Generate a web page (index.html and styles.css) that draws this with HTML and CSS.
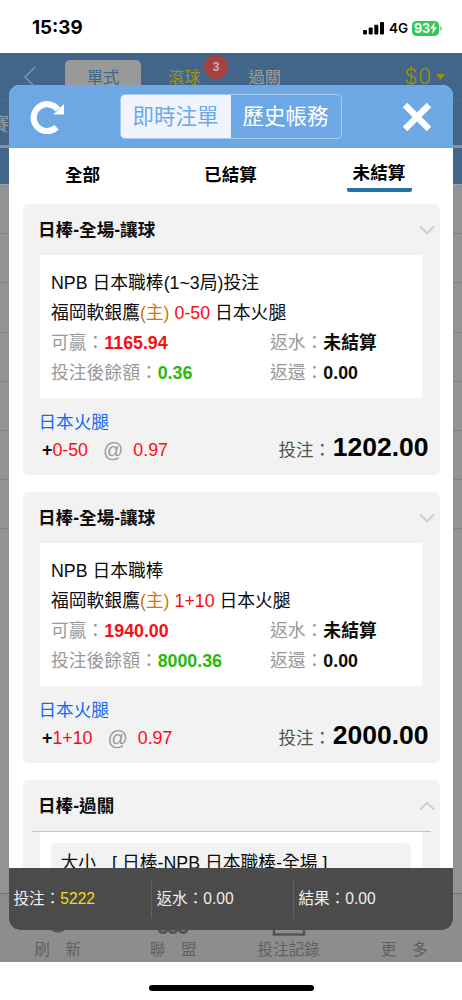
FILE: index.html
```html
<!DOCTYPE html>
<html lang="zh-Hant">
<head>
<meta charset="utf-8">
<meta name="viewport" content="width=device-width, initial-scale=1">
<title>注單</title>
<link rel="stylesheet" href="styles.css">
</head>
<body>
<div class="phone">
  <header class="status">
    <span class="clock">15:39</span>
    <span class="status-right">
      <svg class="signal" width="21" height="14" viewBox="0 0 21 14"><rect x="0" y="9" width="4" height="4.5" rx="1"/><rect x="5.7" y="6.5" width="4" height="7" rx="1"/><rect x="11.3" y="3.8" width="4" height="9.7" rx="1"/><rect x="17" y="1" width="4" height="12.5" rx="1"/></svg>
      <span class="network">4G</span>
      <span class="battery"><span>93</span><svg width="7" height="12" viewBox="0 0 7 12"><path d="M5 0 0 6.6h3L1.800 12 7 5.200H4z" fill="#fff"/></svg></span>
      <span class="nub"></span>
    </span>
  </header>

  <div class="page">
    <div class="topbar">
      <svg class="back" width="13" height="22" viewBox="0 0 13 22"><path d="M12 1 2 11 12 21" fill="none" stroke="#8598aa" stroke-width="1.300"/></svg>
      <span class="mode active">單式</span>
      <span class="mode live">滾球<b class="badge">3</b></span>
      <span class="mode parlay">過關</span>
      <span class="balance">$0</span>
      <span class="caret"></span>
    </div>
    <div class="subbar"><span class="sport">賽</span></div>
    <div class="subbar-2"></div>
    <div class="rows"><i></i><i></i><i></i><i></i><i></i><i></i><i></i></div>
    <nav class="dock">
      <div><svg width="34" height="16" viewBox="0 0 34 16"><circle cx="17" cy="-1" r="9" fill="none" stroke="#555" stroke-width="3"/></svg><span>刷&#12288;新</span></div>
      <div><svg width="34" height="16" viewBox="0 0 34 16"><g fill="none" stroke="#555" stroke-width="3"><circle cx="7" cy="5.500" r="4"/><circle cx="17" cy="5.500" r="4"/><circle cx="27" cy="5.500" r="4"/></g></svg><span>聯&#12288;盟</span></div>
      <div><svg width="34" height="16" viewBox="0 0 34 16"><path d="M2 0V11.500H32V0" fill="none" stroke="#555" stroke-width="2.500"/></svg><span>投注記錄</span></div>
      <div><svg width="34" height="16" viewBox="0 0 34 16"></svg><span>更&#12288;多</span></div>
    </nav>
  </div>
  <div class="home"><span></span></div>

  <section class="modal">
    <div class="modal-head">
      <svg class="refresh" width="36" height="36" viewBox="0 0 36 36"><path d="M26.500 28.200A13.400 13.400 0 1 1 27.800 10.500" fill="none" stroke="#fff" stroke-width="6.200"/><path d="M34 5V15.600H23.500z" fill="#fff"/></svg>
      <div class="segment"><span class="on">即時注單</span><span>歷史帳務</span></div>
      <svg class="close" width="30" height="30" viewBox="0 0 30 30"><path d="M3 3 27 27M27 3 3 27" stroke="#fff" stroke-width="6.300"/></svg>
    </div>
    <div class="tabs"><span><b>全部</b></span><span><b>已結算</b></span><span class="current"><b>未結算</b></span></div>

    <div class="list">
      <article class="card">
        <div class="card-head"><h2>日棒-全場-讓球</h2><svg width="16" height="10" viewBox="0 0 16 10"><path d="M1 1.500 8 8.200 15 1.500"/></svg></div>
        <div class="detail">
          <p>NPB 日本職棒(1~3局)投注</p>
          <p>福岡軟銀鷹<span class="host">(主)</span> <span class="red">0-50</span> 日本火腿</p>
          <div class="pair"><p><span class="label">可贏：</span><b class="red">1165.94</b></p><p><span class="label">返水：</span><b>未結算</b></p></div>
          <div class="pair"><p><span class="label">投注後餘額：</span><b class="green">0.36</b></p><p><span class="label">返還：</span><b>0.00</b></p></div>
        </div>
        <div class="pick">日本火腿</div>
        <div class="stake">
          <span class="odds"><b>+</b><span class="red">0-50</span><span class="at">@</span><span class="red">0.97</span></span>
          <span class="amount"><span class="amount-label">投注：</span><b>1202.00</b></span>
        </div>
      </article>

      <article class="card">
        <div class="card-head"><h2>日棒-全場-讓球</h2><svg width="16" height="10" viewBox="0 0 16 10"><path d="M1 1.500 8 8.200 15 1.500"/></svg></div>
        <div class="detail">
          <p>NPB 日本職棒</p>
          <p>福岡軟銀鷹<span class="host">(主)</span> <span class="red">1+10</span> 日本火腿</p>
          <div class="pair"><p><span class="label">可贏：</span><b class="red">1940.00</b></p><p><span class="label">返水：</span><b>未結算</b></p></div>
          <div class="pair"><p><span class="label">投注後餘額：</span><b class="green">8000.36</b></p><p><span class="label">返還：</span><b>0.00</b></p></div>
        </div>
        <div class="pick">日本火腿</div>
        <div class="stake">
          <span class="odds"><b>+</b><span class="red">1+10</span><span class="at">@</span><span class="red">0.97</span></span>
          <span class="amount"><span class="amount-label">投注：</span><b>2000.00</b></span>
        </div>
      </article>

      <article class="card">
        <div class="card-head"><h2>日棒-過關</h2><svg width="16" height="10" viewBox="0 0 16 10"><path d="M1 8.500 8 1.800 15 8.500"/></svg></div>
        <div class="rule"></div>
        <div class="detail combo"><div class="leg"><span>大小</span><span>[ 日棒-NPB 日本職棒-全場 ]</span></div></div>
      </article>
    </div>

    <footer class="totals">
      <span>投注：<em>5222</em></span>
      <span>返水：0.00</span>
      <span>結果：0.00</span>
    </footer>
  </section>
</div>
</body>
</html>
```

FILE: styles.css
```css
* { box-sizing: border-box; }
body {
  margin: 0;
  background: #fff;
  color: #0c0c0c;
  font-family: "Liberation Sans", "Noto Sans CJK TC", sans-serif;
  font-size: 17.6px;
}
p, h2 { margin: 0; }
.phone { position: relative; display: flex; flex-direction: column; width: 462px; height: 1000px; overflow: hidden; }

/* Status bar */
.status { display: flex; flex: none; justify-content: space-between; height: 53px; padding: 17px 20px 0 32px; font-family: Inter, sans-serif; color: #000; }
.clock { font-size: 18.8px; font-weight: 700; line-height: 22px; }
.status-right { display: flex; height: 22px; align-items: center; }
.network { margin-left: 5px; width: 19px; font-size: 13.5px; font-weight: 600; }
.battery { display: flex; align-items: center; justify-content: center; width: 27px; height: 15px; margin-left: 4px; border-radius: 4.5px; background: #34c759; color: #fff; font-size: 12.5px; font-weight: 700; letter-spacing: -.2px; }
.nub { width: 2px; height: 5px; margin-left: 1px; border-radius: 0 2px 2px 0; background: #bbb; }

/* Dimmed page behind the dialog */
.page { display: flex; flex: none; flex-direction: column; height: 909px; background: #939393; }
.topbar { display: flex; flex: none; height: 47px; background: #42658a; color: #9d9d9d; border-bottom: 1px solid #506f91; }
.back { margin: 13px 0 0 23px; }
.mode { height: 40px; font-size: 16.3px; line-height: 35px; margin-top: 7px; }
.mode.active { width: 76px; margin-left: 29px; border-radius: 5px 5px 0 0; background: #999; color: #42658a; text-align: center; }
.mode.live { position: relative; margin-left: 27px; color: #a09316; }
.badge { position: absolute; top: -5px; left: 36px; width: 24px; height: 24px; border-radius: 50%; background: #a84142; color: #c9b5b5; font-size: 12px; line-height: 24px; text-align: center; }
.mode.parlay { margin-left: 48px; }
.balance { margin: 9px 0 0 123px; color: #a08c12; font-family: Inter, sans-serif; font-size: 21px; font-weight: 300; letter-spacing: .8px; line-height: 30px; }
.caret { width: 9px; height: 6px; margin: 21px 0 0 4px; background: #a08c12; clip-path: polygon(0 0, 100% 0, 50% 100%); }
.subbar { flex: none; height: 48px; background: #42658a; border-bottom: 3px solid #8e9296; overflow: hidden; }
.sport { display: block; margin-left: -9px; color: #8f9aa6; font-size: 18px; line-height: 50px; }
.subbar-2 { flex: none; height: 36px; background: #42658a; }
.rows { flex: 1; border-top: 1px solid #a2a2a2; }
.rows i { display: block; height: 49.2px; border-bottom: 1px solid #818181; }
.dock { display: grid; flex: none; grid-template-columns: repeat(4, 1fr); height: 69px; padding-top: 29px; border-top: 1px solid #747474; background: #8d8d8d; color: #606060; text-align: center; font-size: 15.6px; }
.dock div { display: flex; flex-direction: column; align-items: center; }
.dock svg { flex: none; }
.dock span { line-height: 21px; }
.home { display: flex; justify-content: center; padding-top: 23px; }
.home span { width: 165px; height: 6px; border-radius: 3px; background: #000; }

/* Dialog */
.modal { position: absolute; top: 85px; left: 9px; display: flex; flex-direction: column; width: 444px; height: 845px; border-radius: 11px; background: #fff; overflow: hidden; }
.modal-head { display: flex; flex: none; height: 63px; background: #6da8e4; }
.refresh { margin: 14px 0 0 21px; }
.segment { display: grid; grid-template-columns: 1fr 1fr; width: 222px; height: 45px; margin: 9px 0 0 54px; border: 1px solid #a6caf0; border-radius: 5px; overflow: hidden; color: #fff; font-size: 21.5px; line-height: 45px; text-align: center; }
.segment span { height: 43px; padding-right: 1px; }
.segment .on { background: #f0f5fd; color: #6da8e4; }
.close { margin: 17px 0 0 60px; }
.tabs { display: grid; flex: none; grid-template-columns: repeat(3, 1fr); height: 56px; justify-items: center; color: #000; }
.tabs b { display: block; padding: 12px 1px 0 0; line-height: 31px; }
.tabs .current b { height: 44px; width: 65px; padding: 10px 0 0; text-align: center; }
.tabs .current { height: 44px; background: linear-gradient(#2276a6, #2276a6) 0 100% / 100% 4px no-repeat; border-radius: 2px; }
.list { display: flex; flex: 1; min-height: 0; flex-direction: column; gap: 17px; padding: 0 13.500px; overflow: hidden; }
.card { flex: none; height: 271px; border-radius: 6px; background: #f2f2f2; }
.card-head { display: flex; align-items: center; justify-content: space-between; height: 51px; padding: 0 4.5px 0 15.500px; }
.card-head h2 { font-size: 17.6px; line-height: 30px; }
.card-head svg { fill: none; stroke: #ccc; stroke-width: 1.800; }
.detail { height: 143px; margin: 0 17.5px; padding: 13px 0 0 11px; background: #fff; font-size: 17.8px; line-height: 30px; }
.detail p { height: 30px; white-space: nowrap; }
.pair { display: grid; grid-template-columns: 219px 1fr; height: 30px; }
.label { color: #999; }
.host { color: #cc7a0b; }
.red { color: #f90d13; }
.green { color: #28b90a; }
.pick { padding: 10px 0 0 16px; color: #126bf5; line-height: 28px; }
.stake { display: flex; justify-content: space-between; height: 28px; padding: 0 11px 0 19.500px; line-height: 28px; }
.odds { display: flex; font-size: 17.8px; }
.at { margin: 0 10px 0 15px; color: #999; font-size: 20px; }
.amount { display: flex; align-items: baseline; margin-top: -3px; color: #555; }
.amount-label { margin-right: 1.500px; }
.amount b { color: #000; font-size: 26.500px; line-height: 28px; }
.rule { height: 1px; margin: 0 9px; background: #c3c3c3; }
.combo { padding: 11px 11px 0; }
.leg { display: flex; gap: 16px; height: 60px; padding: 5px 9.5px; border-radius: 6px; background: #f2f2f2; }
.totals { display: grid; flex: none; grid-template-columns: 143px 142px 1fr; height: 62px; padding: 12px 0; background: #4b4b4b; color: #eee; font-size: 15.6px; line-height: 38px; }
.totals span { padding-left: 4.500px; border-right: 1px solid #616161; }
.totals span:last-child { border: 0; }
.totals em { color: #f4df10; font-style: normal; }
```
